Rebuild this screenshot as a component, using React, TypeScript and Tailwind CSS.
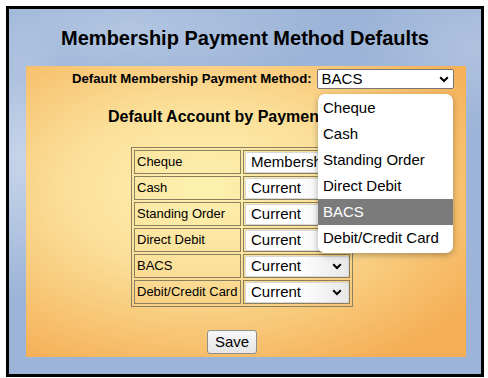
import React from 'react';

const Chevron = () => (
  <svg width="10" height="7" viewBox="0 0 10 7" className="shrink-0">
    <path d="M1.2 1.3 L5 5 L8.8 1.3" fill="none" stroke="#000" strokeWidth="2" />
  </svg>
);

const rows = [
  { method: 'Cheque', account: 'Membership Account' },
  { method: 'Cash', account: 'Current' },
  { method: 'Standing Order', account: 'Current' },
  { method: 'Direct Debit', account: 'Current' },
  { method: 'BACS', account: 'Current' },
  { method: 'Debit/Credit Card', account: 'Current' },
];

const options = ['Cheque', 'Cash', 'Standing Order', 'Direct Debit', 'BACS', 'Debit/Credit Card'];

const App = () => {
  return (
    <div className="w-[488px] h-[378px] bg-white pl-[6px] pt-[6px] font-['Liberation_Sans',Arial,sans-serif] text-black">
      <div className="relative w-[478px] h-[371px] border-[3px] border-black bg-[#9cb4d7] overflow-hidden">
        {/* sky clouds */}
        <div className="absolute inset-0 bg-[radial-gradient(ellipse_60px_140px_at_10px_150px,rgba(235,240,250,0.55),transparent),radial-gradient(ellipse_200px_60px_at_120px_20px,rgba(200,215,235,0.5),transparent),radial-gradient(ellipse_120px_80px_at_470px_40px,rgba(200,212,232,0.45),transparent)]" />

        <h1 className="relative pt-[17px] text-center text-[20px] font-bold leading-[24px]">
          Membership Payment Method Defaults
        </h1>

        <div className="relative ml-[17px] mt-[16px] w-[440px] h-[291px] bg-[radial-gradient(ellipse_75%_70%_at_40%_42%,#fdf1b0_0%,#fbe09a_40%,#f7c372_75%,#f5ae55_100%)]">
          <div className="flex items-center pt-[3px] pl-[46px] h-[23px]">
            <span className="text-[13.2px] font-bold leading-[20px]">Default Membership Payment Method:</span>
            <div className="ml-[5px] flex items-center justify-between w-[137px] h-[20px] bg-white border border-[#767676] rounded-[2px] pl-[4px] pr-[4px]">
              <span className="text-[15px] leading-[18px]">BACS</span>
              <Chevron />
            </div>
          </div>

          <h2 className="mt-[18px] pl-[82px] text-[16px] font-bold leading-[19px] whitespace-nowrap">
            Default Account by Payment Method
          </h2>

          <table className="mt-[21px] ml-[105px] border-separate border-spacing-[2px] border border-[#8a8060] text-[13px]">
            <tbody>
              {rows.map((r) => (
                <tr key={r.method}>
                  <td className="w-[107px] h-[24px] border border-[#8a8060] px-[2px] leading-[16px] whitespace-nowrap">
                    {r.method}
                  </td>
                  <td className="w-[106px] h-[24px] border border-[#8a8060] p-0">
                    <div className="flex items-center justify-between w-[104px] h-[21px] ml-[1px] rounded-[2px] border border-[#d8d8d8] bg-[linear-gradient(to_right,#ffffff_0%,#ffffff_50%,#e8e8e8_100%)] pl-[5px] pr-[6px] overflow-hidden">
                      <span className="text-[15px] leading-[18px] whitespace-nowrap">{r.account}</span>
                      <Chevron />
                    </div>
                  </td>
                </tr>
              ))}
            </tbody>
          </table>

          <button className="mt-[23px] ml-[181px] w-[50px] h-[24px] rounded-[3px] border border-[#8f8f8f] bg-[linear-gradient(#f8f8f8,#e6e6e6)] text-[15px] leading-[18px]">
            Save
          </button>

          {/* open dropdown */}
          <div className="absolute left-[292px] top-[28px] w-[135px] h-[159px] bg-white rounded-[7px] shadow-[0_2px_6px_rgba(0,0,0,0.3)] py-[1px]">
            {options.map((o) => (
              <div
                key={o}
                className={
                  o === 'BACS'
                    ? 'h-[26px] pl-[5px] flex items-center text-[15px] bg-[#7b7b7b] text-white'
                    : 'h-[26px] pl-[5px] flex items-center text-[15px] text-black'
                }
              >
                {o}
              </div>
            ))}
          </div>
        </div>
      </div>
    </div>
  );
};

export default App;
